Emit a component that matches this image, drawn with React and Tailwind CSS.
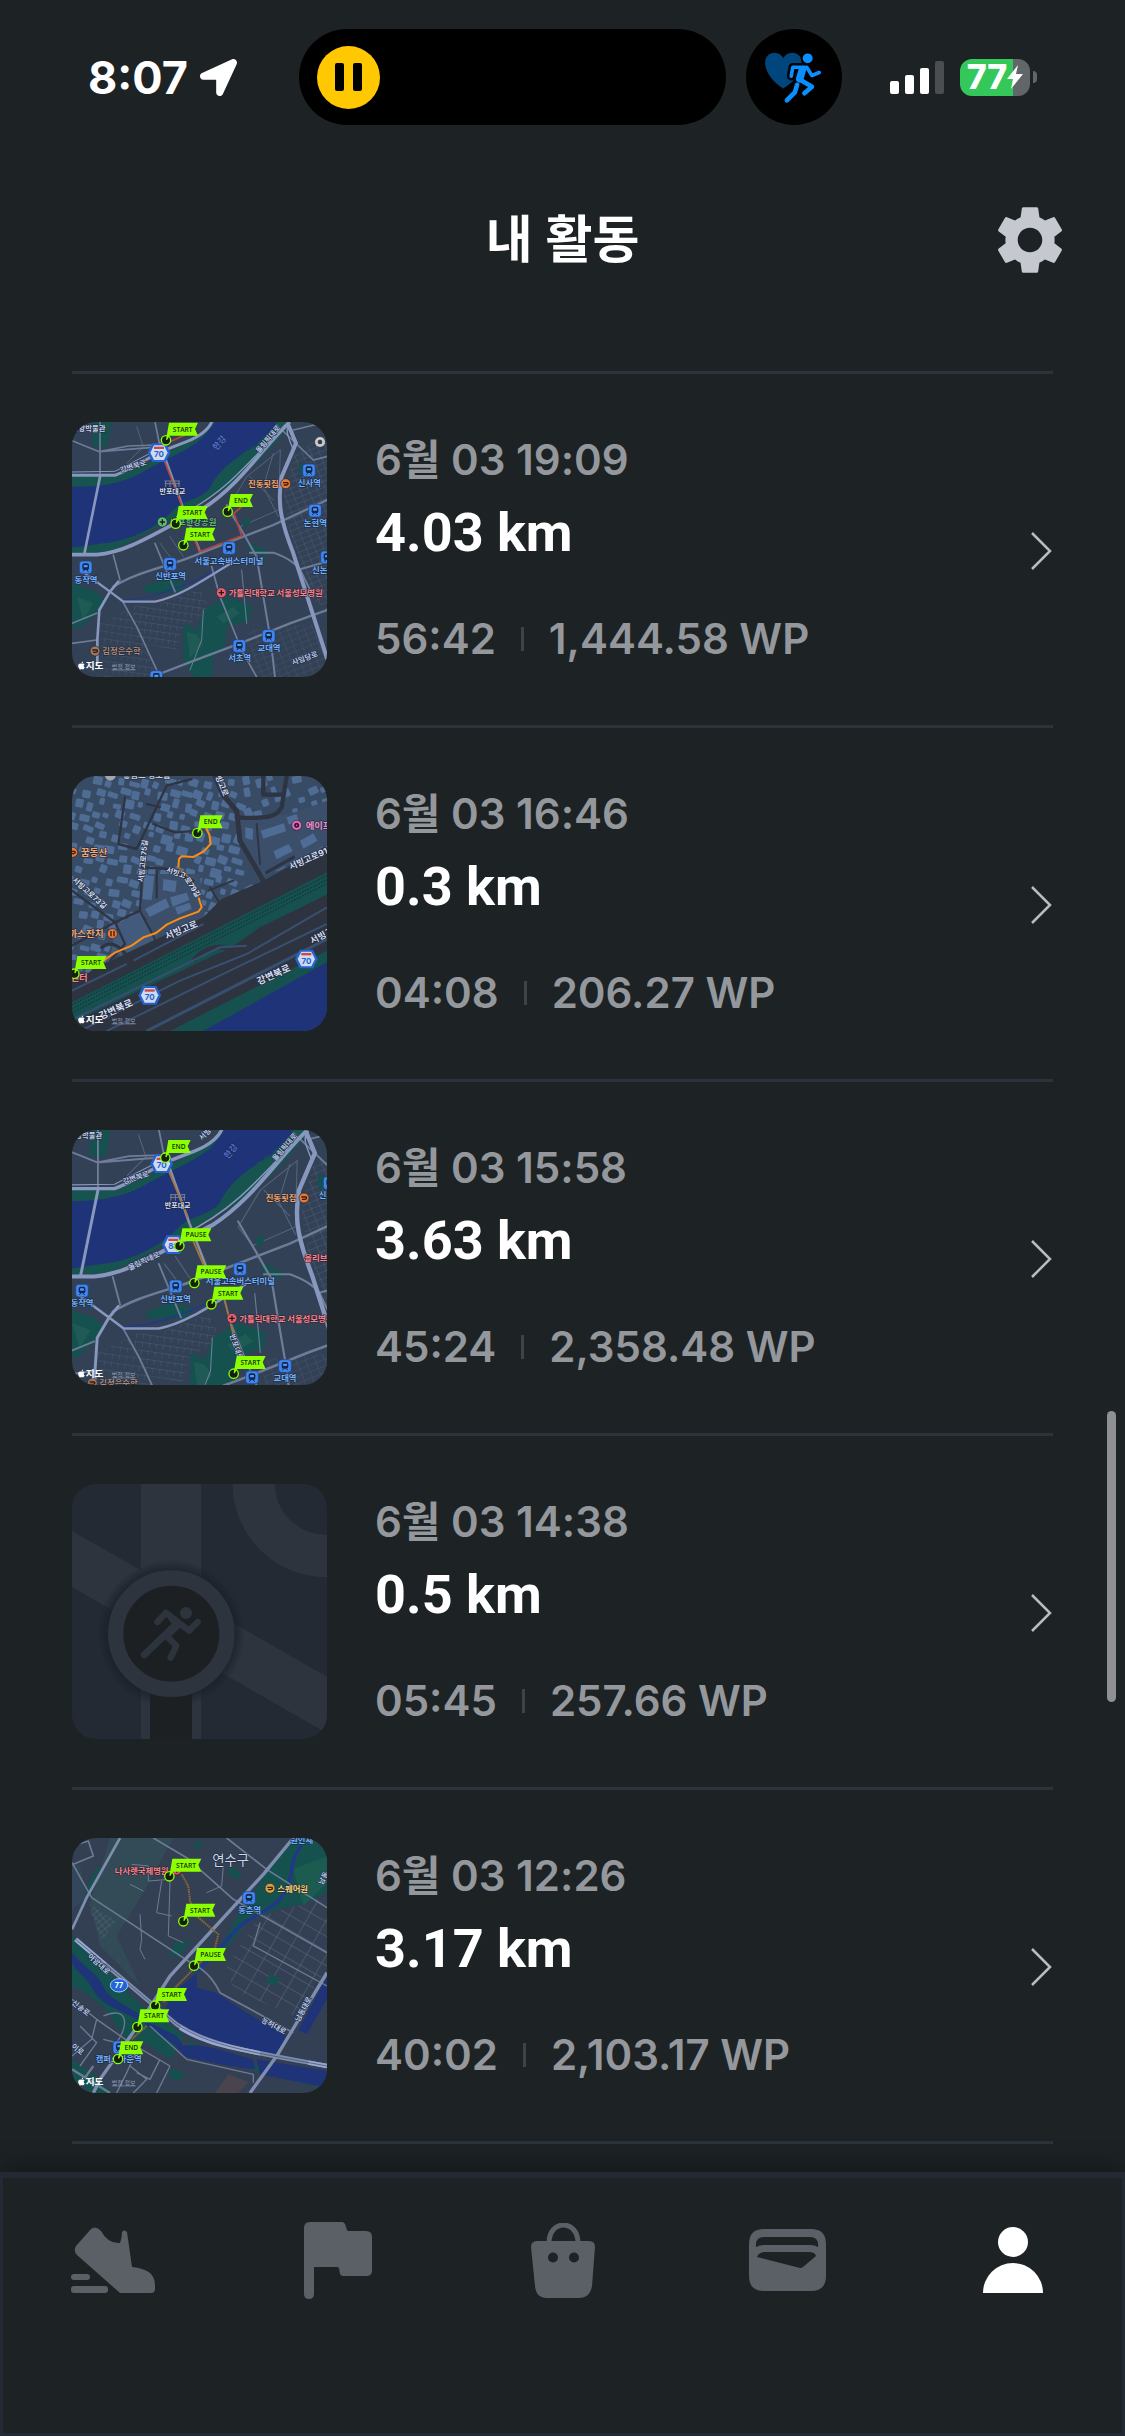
import React from "react";
import { FaApple, FaLocationArrow } from "react-icons/fa";
import { MdSettings } from "react-icons/md";

const mapFont = '"Inter", "Noto Sans CJK KR", sans-serif';

/* ---------- map pieces ---------- */

const FLAG_WIDTH = { START: 88, PAUSE: 88, END: 68 };

const Flag = ({ x, y, label }) => {
  const right = 8 + FLAG_WIDTH[label];
  return (
    <g transform={`translate(${x} ${y})`}>
      <circle r="14" fill="#16200f" stroke="#8cff00" strokeWidth="4" />
      <polygon
        points={`9,-53 ${right},-53 ${right - 9},-34 ${right},-14 11,-14 3,-1 0,-2`}
        fill="#8cff00"
      />
      <text
        x={(right + 4) / 2}
        y="-26"
        textAnchor="middle"
        fontSize="20"
        fontWeight="600"
        fontFamily='"Open Sans", sans-serif'
        fill="#17300a"
      >
        {label}
      </text>
    </g>
  );
};

const Label = ({ x, y, size = 25, color = "#6fb0ff", rotate = 0, weight = 700, anchor = "middle", children }) => (
  <text
    transform={`translate(${x} ${y}) rotate(${rotate})`}
    textAnchor={anchor}
    fontSize={size}
    fontWeight={weight}
    fontFamily={mapFont}
    fill={color}
    stroke="#1b2536"
    strokeWidth="3"
    paintOrder="stroke"
  >
    {children}
  </text>
);

const Station = ({ x, y }) => (
  <g transform={`translate(${x} ${y})`}>
    <rect x="-19" y="-19" width="38" height="38" rx="9" fill="#3f86ee" stroke="#1d3d80" strokeWidth="2" />
    <rect x="-10" y="-12" width="20" height="20" rx="6" fill="#14264a" />
    <rect x="-6" y="-7" width="12" height="7" rx="2" fill="#4f95f5" />
    <path d="M-8 13l4-5M8 13l-4-5" stroke="#14264a" strokeWidth="3" />
  </g>
);

const Poi = ({ x, y, color, mark = "plus" }) => (
  <g transform={`translate(${x} ${y})`}>
    <circle r="15" fill={color} stroke="#1b2536" strokeWidth="2" />
    {mark === "plus" && <path d="M0-8V8M-8 0H8" stroke="#2a1720" strokeWidth="4" />}
    {mark === "fork" && <path d="M-4-8V8M5-8V8" stroke="#3b1c08" strokeWidth="4" />}
    {mark === "dot" && <circle r="5" fill="none" stroke="#3b1030" strokeWidth="5" />}
    {mark === "bar" && <path d="M-8-3H6q4 5-3 7H-6" stroke="#3b1c08" strokeWidth="4" fill="none" />}
  </g>
);

const Shield = ({ x, y, label = "70" }) => (
  <g transform={`translate(${x} ${y})`}>
    <path d="M-34 0L-20-28H20L34 0L20 28H-20Z" fill="#2463cf" />
    <path d="M-26 0L-15-22H15L26 0L15 22H-15Z" fill="#cfdaf0" />
    <rect x="-15" y="-18" width="30" height="7" fill="#cf4747" />
    <text y="14" textAnchor="middle" fontSize="24" fontWeight="700" fontFamily={mapFont} fill="#2463cf">
      {label}
    </text>
  </g>
);

const Credit = () => (
  <g>
    <FaApple x="51" y="753" size="27" color="#ffffff" />
    <text x="77" y="777" fontSize="29" fontWeight="700" fontFamily={mapFont} fill="#ffffff">
      지도
    </text>
    <text x="155" y="776" fontSize="18" fontFamily={mapFont} fill="#8f9bb0" textDecoration="underline">
      법적 정보
    </text>
  </g>
);

const MapFrame = ({ title, bg, children }) => (
  <svg
    viewBox="36 36 765 765"
    role="img"
    aria-label={title}
    className="size-[255px] shrink-0 rounded-3xl"
  >
    <rect x="36" y="36" width="765" height="765" fill={bg} />
    {children}
  </svg>
);

/* Seoul around Banpo, shared by two thumbnails */
const SeoulBase = ({ id }) => (
  <g fill="none" strokeLinecap="round" strokeLinejoin="round">
    <defs>
      <pattern id={`${id}-a`} width="24" height="17" patternUnits="userSpaceOnUse" patternTransform="rotate(-22)">
        <path d="M0 0H24M0 0V17" stroke="#56647d" strokeWidth="2" />
      </pattern>
      <pattern id={`${id}-b`} width="19" height="22" patternUnits="userSpaceOnUse" patternTransform="rotate(8)">
        <path d="M0 0H19M0 0V12" stroke="#56647d" strokeWidth="2" />
      </pattern>
    </defs>

    {/* side street blocks */}
    <path d="M705 130L801 70V600L765 570L690 370L672 250Z" fill={`url(#${id}-a)`} />
    <path d="M560 660L690 650L760 640L801 740V801H590Z" fill={`url(#${id}-a)`} opacity=".7" />
    <path d="M215 590L290 585L420 535L450 600L370 650L350 720L240 700Z" fill={`url(#${id}-b)`} />
    <path d="M120 640L200 600L280 760V801H130Z" fill={`url(#${id}-b)`} opacity=".8" />
    <path d="M660 120L560 200L500 300L540 350L655 300Z" stroke="#55637c" strokeWidth="3" />
    <path d="M640 130L610 230L655 320M570 200L640 270M300 400L345 460M330 380L370 440M230 50L250 110L200 160" stroke="#55637c" strokeWidth="3" />

    {/* parks */}
    <g fill="#14514f">
      <path d="M100 36h54l-14 75-44-4z" />
      <path d="M36 520L110 545L138 575L110 610L60 655L36 650Z" />
      <path d="M260 525L320 505L380 520L360 545L300 550L245 545Z" />
      <path d="M372 640L410 660L430 600L500 560L575 585L570 630L500 650L495 710L460 740L455 801H400L370 745Z" />
      <path d="M715 160h26v30l-22 10zM560 395l60 25v20l-50-10zM545 335l20-15 6 22-18 12z" />
    </g>
    <path d="M380 665l30 8 20 30-40 40zM470 620l50-30 20 20-50 30zM50 560l50 20-30 50z" fill="#28605a" opacity=".6" />

    {/* Han river with its banks */}
    <path d="M36 190L170 200L290 145L380 100L440 55L452 36H700L600 150L500 235L380 300L260 370L150 425L36 432Z" fill="#17534f" />
    <path d="M36 230C120 232 190 220 250 185C320 145 400 115 435 75L465 36H650C630 70 600 85 590 105C560 125 480 165 450 235C420 270 370 270 340 300C290 355 200 395 130 400C90 405 60 412 36 412Z" fill="#1f3379" />
    <path d="M550 130l12-9 6 6-12 10zM570 114l10-8" stroke="#17534f" strokeWidth="3" />
    <path d="M190 570C280 570 400 520 520 455" stroke="#23388a" strokeWidth="4" />

    {/* minor roads */}
    <g stroke="#6e7c98" strokeWidth="5">
      <path d="M285 36L300 110" />
      <path d="M120 36V195M36 92L118 125L270 113M118 125L205 108L290 105" />
      <path d="M160 435L180 510M285 400L345 545M455 470L480 560L545 720L590 801" />
      <path d="M160 530C240 480 330 470 420 430L640 345L801 270" strokeWidth="7" />
      <path d="M500 285L550 370L590 440L610 560L632 690L645 801" strokeWidth="6" />
      <path d="M570 428H640C690 445 715 470 720 478L801 455M720 478L760 560" strokeWidth="6" />
      <path d="M290 795L420 745L540 700L690 640L801 600" strokeWidth="7" />
      <path d="M190 578L230 650L300 801M36 700L110 690M36 640L110 610" />
      <path d="M430 600L425 690L390 780M545 480L560 640" strokeWidth="3" />
      <path d="M700 60L801 36M650 45L760 150L801 140" />
    </g>

    {/* main roads */}
    <g stroke="#8797bd">
      <path d="M120 200L73 432" strokeWidth="8" />
      <path d="M36 196H165C220 175 270 140 310 122L380 95C430 75 450 50 455 36" strokeWidth="9" />
      <path d="M36 186L165 184L280 125" strokeWidth="3" />
      <path d="M36 434H110C210 425 290 365 430 295C540 225 610 110 685 40" strokeWidth="11" />
      <path d="M350 320C470 265 540 190 660 60" strokeWidth="4" />
      <path d="M685 45L708 100L665 200C650 280 665 340 700 430L801 745" strokeWidth="12" />
      <path d="M75 490L150 545L190 575H285C360 560 430 510 520 455" strokeWidth="7" />
      <path d="M175 515L150 545L118 600L112 690V760" strokeWidth="8" />
      <path d="M690 40C670 60 690 90 700 120" strokeWidth="4" />
    </g>
    <path d="M300 100L368 290L420 425" stroke="#8b8f9f" strokeWidth="7" />
  </g>
);

const Bridge = ({ x, y }) => (
  <g transform={`translate(${x} ${y})`} stroke="#7d7f86" strokeWidth="3" fill="none">
    <path d="M-23-8H23M-23 0H23M-20-8V10M-7-8V10M7-8V10M20-8V10" />
  </g>
);

const BanpoMap = () => (
  <MapFrame title="4.03 km 경로" bg="#334156">
    <SeoulBase id="banpo" />
    <path
      d="M330 95L375 75M312 150L365 285M405 390L418 425L545 377L522 310L545 290"
      fill="none"
      stroke="#b3443f"
      strokeWidth="5"
    />
    <Label x={86} y={64} size={22} color="#c6d3ee">중앙박물관</Label>
    <Label x={222} y={176} size={22} color="#b9c8ea" rotate={-18}>강변북로</Label>
    <Label x={485} y={104} size={26} color="#4d70dd" rotate={-52}>한강</Label>
    <Label x={630} y={92} size={22} color="#b9c8ea" rotate={-50}>올림픽대로</Label>
    <Shield x={297} y={128} />
    <Bridge x={337} y={221} />
    <Label x={337} y={251} size={21} color="#d5def2">반포대교</Label>
    <Poi x={307} y={336} color="#58c070" />
    <Label x={400} y={345} size={25} color="#62bd78">반포한강공원</Label>
    <Station x={747} y={181} />
    <Label x={748} y={229}>신사역</Label>
    <Poi x={677} y={221} color="#e5793b" mark="bar" />
    <Label x={610} y={230} color="#f2a46c">진동횟집</Label>
    <Station x={765} y={302} />
    <Label x={766} y={348}>논현역</Label>
    <Station x={801} y={442} />
    <Label x={756} y={488} anchor="start">신논현역</Label>
    <Station x={507} y={414} />
    <Label x={507} y={461}>서울고속버스터미널</Label>
    <Station x={330} y={462} />
    <Label x={332} y={508}>신반포역</Label>
    <Station x={77} y={472} />
    <Label x={78} y={518}>동작역</Label>
    <Poi x={484} y={548} color="#e2606c" />
    <Label x={506} y={557} color="#ff7f86" anchor="start">가톨릭대학교 서울성모병원</Label>
    <Station x={626} y={678} />
    <Label x={627} y={723}>교대역</Label>
    <Station x={538} y={708} />
    <Label x={539} y={753}>서초역</Label>
    <Label x={737} y={752} size={22} color="#b9c8ea" rotate={-20}>사임당로</Label>
    <Poi x={105} y={723} color="#9a7664" mark="bar" />
    <Label x={127} y={733} color="#b08c7a" anchor="start">김정은수학</Label>
    <Station x={289} y={801} />
    <circle cx="780" cy="96" r="15" fill="#c9cbd0" />
    <circle cx="780" cy="96" r="7" fill="#3b3d42" />
    <Flag x={318} y={91} label="START" />
    <Flag x={503} y={305} label="END" />
    <Flag x={347} y={341} label="START" />
    <Flag x={370} y={406} label="START" />
    <Credit />
  </MapFrame>
);

const RiversideMap = () => (
  <MapFrame title="3.63 km 경로" bg="#334156">
    <g transform="translate(-19 -5) scale(1.107)">
      <SeoulBase id="riverside" />
    </g>
    <path
      d="M322 150L385 300M400 370L430 440M494 545L520 650L548 720"
      fill="none"
      stroke="#a5743c"
      strokeWidth="5"
    />
    <Label x={76} y={60} size={22} color="#c6d3ee">중앙박물관</Label>
    <Label x={230} y={186} size={22} color="#b9c8ea" rotate={-18}>강변북로</Label>
    <Label x={440} y={54} size={22} color="#b9c8ea" rotate={-45}>서빙</Label>
    <Label x={519} y={106} size={26} color="#4d70dd" rotate={-50}>한강</Label>
    <Label x={680} y={92} size={22} color="#b9c8ea" rotate={-50}>올림픽대로</Label>
    <Label x={255} y={436} size={22} color="#b9c8ea" rotate={-25}>올림픽대로</Label>
    <Shield x={305} y={137} />
    <Shield x={340} y={380} label="88" />
    <Bridge x={353} y={238} />
    <Label x={353} y={269} size={21} color="#d5def2">반포대교</Label>
    <Poi x={732} y={240} color="#e5793b" mark="bar" />
    <Label x={663} y={249} color="#f2a46c">진동횟집</Label>
    <Station x={809} y={195} />
    <Label x={776} y={241} anchor="start">신사역</Label>
    <Label x={733} y={429} color="#ff7f86" anchor="start">올리브영</Label>
    <Station x={540} y={453} />
    <Label x={541} y={499}>서울고속버스터미널</Label>
    <Station x={347} y={505} />
    <Label x={347} y={551}>신반포역</Label>
    <Station x={66} y={518} />
    <Label x={66} y={564}>동작역</Label>
    <Poi x={516} y={601} color="#e2606c" />
    <Label x={538} y={611} color="#ff7f86" anchor="start">가톨릭대학교 서울성모병원</Label>
    <Label x={522} y={690} size={22} color="#b9c8ea" rotate={70}>반포대로</Label>
    <Station x={675} y={744} />
    <Label x={675} y={789}>교대역</Label>
    <Station x={576} y={778} />
    <Poi x={97} y={795} color="#9a7664" mark="bar" />
    <Label x={118} y={804} color="#b08c7a" anchor="start">김정은수학</Label>
    <Flag x={316} y={119} label="END" />
    <Flag x={358} y={384} label="PAUSE" />
    <Flag x={403} y={495} label="PAUSE" />
    <Flag x={454} y={559} label="START" />
    <Flag x={521} y={767} label="START" />
    <Credit />
  </MapFrame>
);

// cheap repeatable noise in 0..1
const noise = (n) => {
  const v = Math.sin(n * 127.1) * 43758.5453;
  return v - Math.floor(v);
};

// houses on a loose grid, each block with its own size and tilt
const houses = Array.from({ length: 22 * 18 }, (_, i) => {
  const col = i % 22;
  const row = Math.floor(i / 22);
  const east = col > 13;
  return {
    x: 20 + col * 37 + (row % 3) * 11 + noise(i) * 10,
    y: 34 + row * 33 + (col % 2) * 9 + noise(i + 500) * 9,
    w: 15 + noise(i + 900) * 19,
    h: 15 + noise(i + 1300) * 14,
    r: (east ? -28 : 6) + noise(i + 1700) * 18,
    skip: noise(i + 2100) < (east ? 0.35 : 0.1),
  };
}).filter((house) => !house.skip);

const VillageMap = () => (
  <MapFrame title="0.3 km 경로" bg="#384b65">
    <g fill="#4f6c95">
      {houses.map((b, i) => (
        <rect
          key={i}
          x={b.x}
          y={b.y}
          width={b.w}
          height={b.h}
          rx="4"
          transform={`rotate(${b.r} ${b.x} ${b.y})`}
        />
      ))}
    </g>
    <path d="M170 480L240 445L285 530L220 560L150 580Z" fill="#425a7b" />
    <path d="M540 165L690 150L801 110V240L610 340L540 230Z" fill="#3b4f6a" />
    <path d="M245 330H420L430 470L290 525L245 440Z" fill="#3b4f6a" />
    <g fill="#4f6c95">
      <path d="M253 332l30 4-8 72-28-2zM255 435l62-32 12 26-60 30zM310 345l40 6-4 34-38-6zM330 400l50-14 8 22-50 20zM345 430l44-14 6 18-42 18z" />
      <path d="M602 200l70-22 6 24-68 22zM680 160l30-10 6 20-30 12zM640 262l46-22 12 22-48 24zM720 230l40-22 12 22-42 24zM556 190l24 4-2 34-22-6z" />
    </g>

    {/* lanes of the village */}
    <g fill="none" stroke="#2e3442" strokeLinecap="round" strokeLinejoin="round">
      <path d="M195 100L175 240L230 255L320 65L395 45M280 180L345 205L420 200M240 310L330 315L400 350M245 355L240 440L165 475L36 380M240 440L285 525M165 475L195 540L150 590M290 320V400M165 475L36 545" strokeWidth="7" />
      <path d="M590 180L600 300M450 370L480 420M260 120L300 130M445 380L520 350" strokeWidth="6" />
      <path d="M465 36L490 95L530 140L540 230L610 350" strokeWidth="15" />
      <path d="M530 160C620 165 650 160 665 130L680 36M610 36V92H670" strokeWidth="13" />
      <path d="M620 325L700 280M125 550C150 530 180 540 210 590" strokeWidth="10" />
    </g>

    {/* expressway, rails and the river bank */}
    <path d="M36 655L130 600L290 525L430 460L485 405L610 350L801 245V801H36Z" fill="#2e3340" />
    <path d="M36 715L801 325V392L600 490L500 560L36 790Z" fill="#16504f" />
    <path d="M330 801L801 560V620L430 801Z" fill="#16504f" />
    <path d="M430 801L801 595V801Z" fill="#1f3379" />
    <g fill="none" stroke="#2e3340">
      <path d="M36 790L480 580C600 545 680 470 801 405" strokeWidth="26" />
      <path d="M400 590C440 540 500 540 515 570C530 600 510 610 500 630" strokeWidth="14" />
    </g>
    <g fill="none" stroke="#384f70" strokeWidth="6">
      <path d="M36 680L200 600M220 590L430 480" />
      <path d="M60 801L360 650L560 570L801 430" />
      <path d="M140 801L530 610L801 480" />
      <path d="M260 801L801 525" strokeWidth="9" />
      <path d="M36 768L480 550L560 545" />
    </g>
    <g fill="none" stroke="#0f3234" strokeWidth="3" strokeDasharray="5 4">
      <path d="M36 722L801 335M36 734L801 347M36 746L801 359" />
    </g>

    <path
      d="M130 590L165 566L215 545L250 520L288 507L320 482L360 463L415 443L425 430L416 402M355 310L357 285L365 277L400 279L430 263L452 240L448 212L438 192"
      fill="none"
      stroke="#ff8c12"
      strokeWidth="6"
    />
    <path d="M355 310L395 350L416 402" fill="none" stroke="#b36a20" strokeWidth="4" />

    <circle cx="151" cy="34" r="16" fill="#a3a8b0" />
    <Label x={260} y={43} color="#c6cede">홍림스 정오름</Label>
    <Label x={478} y={68} size={24} color="#d5def2" rotate={68}>빙고로</Label>
    <Label x={250} y={355} size={22} color="#d5def2" rotate={-84} anchor="start">서빙고로75길</Label>
    <Label x={36} y={350} size={22} color="#d5def2" rotate={42} anchor="start">서빙고로73길</Label>
    <Label x={317} y={323} size={22} color="#d5def2" rotate={20} anchor="start">서빙고</Label>
    <Label x={373} y={345} size={22} color="#d5def2" rotate={58} anchor="start">로79길</Label>
    <Label x={368} y={507} size={28} color="#d5def2" rotate={-23}>서빙고로</Label>
    <Label x={692} y={318} size={26} color="#d5def2" rotate={-24} anchor="start">서빙고로91길</Label>
    <Label x={757} y={541} size={27} color="#d5def2" rotate={-28} anchor="start">서빙고</Label>
    <Label x={645} y={641} size={29} color="#d5def2" rotate={-24}>강변북로</Label>
    <Label x={172} y={745} size={29} color="#d5def2" rotate={-24}>강변북로</Label>
    <Poi x={38} y={265} color="#e5793b" mark="bar" />
    <Label x={62} y={276} size={29} color="#f2a46c" anchor="start">꿈동산</Label>
    <Label x={131} y={520} size={29} color="#f2a46c" anchor="end">돈까스잔치</Label>
    <Poi x={157} y={509} color="#e5793b" mark="fork" />
    <Poi x={710} y={184} color="#e26bb8" mark="dot" />
    <Label x={737} y={194} size={28} color="#f08fd0" anchor="start">에이프</Label>
    <Label x={83} y={650} size={28} color="#ff7f86" anchor="end">센터</Label>
    <Shield x={739} y={585} />
    <Shield x={269} y={694} />
    <Flag x={412} y={207} label="END" />
    <Flag x={43} y={629} label="START" />
    <Credit />
  </MapFrame>
);

const YeonsuMap = () => (
  <MapFrame title="3.17 km 경로" bg="#334053">
    <defs>
      <pattern id="yeonsu-grid" width="52" height="38" patternUnits="userSpaceOnUse" patternTransform="rotate(30)">
        <path d="M0 0H52M0 0V38" stroke="#5d6a83" strokeWidth="3" />
      </pattern>
      <pattern id="yeonsu-fine" width="16" height="14" patternUnits="userSpaceOnUse" patternTransform="rotate(-40)">
        <path d="M0 0H16M0 0V14" stroke="#64718a" strokeWidth="2" />
      </pattern>
    </defs>
    <path d="M150 36H340L250 200L170 330L240 480L120 360L90 230Z" fill="#324b56" />
    <path d="M36 250L80 215L60 120L36 110Z" fill="#33475a" />
    <path d="M500 420L600 270L801 215V430L700 570L520 490Z" fill="url(#yeonsu-grid)" />
    <path d="M84 232L167 285L125 345Z" fill="url(#yeonsu-fine)" />

    {/* green areas */}
    <g fill="#15524f">
      <path d="M690 36H770L801 80V200L740 230L650 250L560 290L480 390L450 410L540 260Z" />
      <path d="M36 330L130 420L250 545L350 610L410 680L600 740L801 790V760L590 720L370 640L330 700L240 640L200 640L130 540L60 490L36 480Z" />
      <path d="M85 205L125 120L110 125L75 195ZM345 345l30 12-14 38-34-10zM375 340l14 6-6 18-14-6zM630 445l30 12-12 22-30-12zM510 120l34 20-8 22-34-20zM405 45l20 6-4 20-18-6z" />
      <path d="M36 700L130 770L150 801H100L36 760ZM335 725l40 20-20 20-30-12z" />
    </g>
    <path d="M700 130L801 90V170L730 240Z" fill="#1c5c50" />
    <path d="M505 745L565 768L535 801H465Z" fill="#4a444e" />

    {/* water */}
    <g fill="#1f3379">
      <path d="M410 440L410 485L470 500L560 560L680 630L645 690L520 655L430 650L360 600L300 580L340 500Z" />
      <path d="M36 380C80 430 110 440 130 480C150 530 220 540 270 590L350 630L370 660C440 650 500 680 580 700L585 730C520 725 430 705 370 690C350 650 300 630 250 590C180 550 130 540 105 500C80 450 50 440 36 410Z" />
      <path d="M590 700L801 735V785L600 745Z" />
      <path d="M801 450V520L740 625L715 612Z" />
    </g>
    <path d="M725 60C690 90 700 150 680 190C650 250 590 260 540 300L410 440" fill="none" stroke="#20378a" strokeWidth="10" />

    {/* streets */}
    <g fill="none" stroke="#6d7a94" strokeWidth="5" strokeLinejoin="round">
      <path d="M36 60L85 45L100 90L40 115M36 110L95 215L400 415C450 440 470 480 480 500L700 620M280 36L380 95L520 220L801 380M500 36L620 130L801 245" />
      <path d="M330 165L325 330L370 350M305 165L290 260L335 270M215 115L265 120V165L330 160M240 265L245 340L240 370L255 400M210 175L250 195M490 120L485 180L440 200" strokeWidth="3" />
      <path d="M36 520L110 580L210 650L330 720M130 570C200 540 210 590 170 650L130 640M60 600L110 650L60 720M110 580L95 640L36 690M240 650L200 740L170 801M300 700L270 760L230 740M330 720L290 801M210 720L260 760L220 801M600 290L580 360L801 480" strokeWidth="4" />
      <path d="M36 730L150 801M75 755L100 720" strokeWidth="7" />
      <path d="M270 600L380 700L580 745L580 770" strokeWidth="4" />
    </g>
    <g fill="none" stroke="#7f8eae">
      <path d="M180 36L80 215L36 310" strokeWidth="8" />
      <path d="M700 36L610 145L330 450L240 590L120 760L100 801" strokeWidth="10" />
      <path d="M801 440L650 690L570 801" strokeWidth="10" />
      <path d="M47 340L260 520L350 595C450 660 560 675 801 720" strokeWidth="13" />
    </g>
    <path d="M47 340L135 415M360 605C440 655 520 665 600 682M745 710L801 720" fill="none" stroke="#98a8d0" strokeWidth="13" />
    <path d="M47 340L260 520L350 595C450 660 560 675 801 720" fill="none" stroke="#3c4a63" strokeWidth="2" />

    <path
      d="M365 145L385 180L390 225L410 270L475 325L465 365M430 400L350 480L310 530M260 600L215 640"
      fill="none"
      stroke="#8a6535"
      strokeWidth="6"
      strokeDasharray="5 2"
    />

    <Label x={512} y={118} size={40} color="#cfd9ec" weight={400}>연수구</Label>
    <Label x={725} y={51}>원인재</Label>
    <Label x={245} y={143} color="#ff7f86">나사렛국제병원</Label>
    <Poi x={350} y={132} color="#d84f5a" />
    <Poi x={630} y={187} color="#d9a23c" mark="bar" />
    <Label x={652} y={197} color="#f5d374" anchor="start">스퀘어원</Label>
    <Station x={567} y={216} />
    <Label x={569} y={261}>동춘역</Label>
    <Label x={112} y={420} size={22} color="#b9c8ea" rotate={42}>아암대로</Label>
    <Label x={58} y={552} size={22} color="#b9c8ea" rotate={38}>신송로</Label>
    <Label x={48} y={676} size={22} color="#b9c8ea" rotate={38}>이로</Label>
    <Label x={638} y={606} size={22} color="#b9c8ea" rotate={28}>능허대로</Label>
    <Label x={737} y={553} size={22} color="#b9c8ea" rotate={-62}>남동대로</Label>
    <Label x={797} y={160} size={22} color="#b9c8ea" rotate={-62}>남동</Label>
    <ellipse cx="177" cy="478" rx="26" ry="20" fill="#1f66d8" stroke="#a8c4f5" strokeWidth="3" />
    <text x="177" y="486" textAnchor="middle" fontSize="21" fontWeight="700" fontFamily={mapFont} fill="#ffffff">
      77
    </text>
    <Station x={178} y={664} />
    <Label x={176} y={707}>캠퍼스타운역</Label>
    <Flag x={328} y={151} label="START" />
    <Flag x={370} y={286} label="START" />
    <Flag x={402} y={419} label="PAUSE" />
    <Flag x={285} y={539} label="START" />
    <Flag x={232} y={603} label="START" />
    <Flag x={174} y={699} label="END" />
    <Credit />
  </MapFrame>
);

const EmptyMap = () => (
  <MapFrame title="경로 없음" bg="#232a33">
    <defs>
      <radialGradient id="empty-shade">
        <stop offset="84%" stopColor="#1a1f27" stopOpacity=".8" />
        <stop offset="100%" stopColor="#1a1f27" stopOpacity="0" />
      </radialGradient>
    </defs>
    <g fill="#2d343e">
      <rect x="243" y="36" width="180" height="765" />
      <path d="M36 177L801 614V784L36 345Z" />
    </g>
    <circle cx="799" cy="34" r="218" fill="none" stroke="#2d343e" strokeWidth="127" />
    <circle cx="333" cy="485" r="222" fill="url(#empty-shade)" />
    <path d="M270 640H396V801H270Z" fill="#1c2023" />
    <circle cx="334" cy="485" r="167" fill="#1c2023" stroke="#2d343e" strokeWidth="46" />
    <circle cx="378" cy="423" r="18" fill="#2d343e" />
    <g fill="none" stroke="#2d343e" strokeWidth="19" strokeLinecap="round" strokeLinejoin="round">
      <path d="M292 450L318 422L387 476L413 450" />
      <path d="M253 548L350 455" strokeWidth="21" />
      <path d="M322 494L349 521L332 557" />
      <path d="M335 440L352 462L325 488" />
    </g>
  </MapFrame>
);

/* ---------- status bar ---------- */

const HeartRunner = () => (
  <svg viewBox="21 15 291 291" className="size-24" aria-hidden="true">
    <path
      d="M134 195C110 182 79 150 79 118C79 98 92 87 107 87C120 87 129 94 134 103C139 94 148 87 161 87C178 87 190 98 190 118C190 150 158 182 134 195Z"
      fill="#00457c"
    />
    <g fill="none" stroke="#000000" strokeLinecap="round" strokeLinejoin="round">
      <circle cx="208" cy="104" r="18" fill="#000000" strokeWidth="6" />
      <path d="M158 158L163 131H200L205 131L221 156L243 147" strokeWidth="26" />
      <path d="M190 136L184 170L222 190L198 211M176 180L169 207L145 231" strokeWidth="28" />
    </g>
    <g fill="none" stroke="#0a8fff" strokeLinecap="round" strokeLinejoin="round">
      <path d="M158 158L163 131H200L205 131L221 156L243 147" strokeWidth="11" />
      <path d="M192 138L184 166" strokeWidth="23" />
      <path d="M184 168L221 190L198 210" strokeWidth="14" />
      <path d="M176 184L169 207L145 231" strokeWidth="14" />
    </g>
    <circle cx="208" cy="104" r="15" fill="#0a8fff" />
  </svg>
);

const StatusBar = () => (
  <div className="flex h-[155px] items-start justify-between pt-[29px] pr-[88px] pl-[88px]">
    <div className="flex h-24 w-[211px] items-center gap-3">
      <span className="text-[45px] leading-none font-bold">8:07</span>
      <FaLocationArrow size={37} />
    </div>

    <div className="flex flex-1 gap-5">
      <div className="flex h-24 w-[427px] items-center rounded-full bg-black pl-[18px]">
        <span className="flex size-[63px] items-center justify-center gap-[9px] rounded-full bg-[#ffc800]">
          <span className="h-7 w-[9px] rounded-xs bg-black" />
          <span className="h-7 w-[9px] rounded-xs bg-black" />
        </span>
      </div>
      <div className="size-24 rounded-full bg-black">
        <HeartRunner />
      </div>
    </div>

    <div className="flex h-24 items-center justify-end gap-4">
      <div className="flex items-end gap-[6px]">
        <span className="h-[13px] w-[9px] rounded-xs bg-white" />
        <span className="h-[19px] w-[9px] rounded-xs bg-white" />
        <span className="h-[26px] w-[9px] rounded-xs bg-white" />
        <span className="h-[33px] w-[9px] rounded-xs bg-[#4a4e51]" />
      </div>
      <div className="flex items-center gap-[3px]">
        <div className="flex h-[37px] w-[70px] items-center justify-center overflow-hidden rounded-xl bg-linear-to-r from-[#34c759] from-76% to-[#636669] to-76%">
          <span className="text-[34px] leading-none font-extrabold">77</span>
          <svg viewBox="0 0 16 24" className="h-6 w-4" aria-hidden="true">
            <path d="M11 0L0 14H6L4 24L16 9H9Z" fill="#ffffff" />
          </svg>
        </div>
        <span className="h-3 w-1 rounded-r-full bg-[#636669]" />
      </div>
    </div>
  </div>
);

/* ---------- activity list ---------- */

const activities = [
  { date: "6월 03 19:09", distance: "4.03 km", time: "56:42", points: "1,444.58 WP", Map: BanpoMap },
  { date: "6월 03 16:46", distance: "0.3 km", time: "04:08", points: "206.27 WP", Map: VillageMap },
  { date: "6월 03 15:58", distance: "3.63 km", time: "45:24", points: "2,358.48 WP", Map: RiversideMap },
  { date: "6월 03 14:38", distance: "0.5 km", time: "05:45", points: "257.66 WP", Map: EmptyMap },
  { date: "6월 03 12:26", distance: "3.17 km", time: "40:02", points: "2,103.17 WP", Map: YeonsuMap },
];

const ActivityRow = ({ activity }) => {
  const { date, distance, time, points, Map } = activity;
  return (
    <li className="border-b-[3px] border-[#2b333b]">
      <a href="#activity" className="flex items-center gap-12 py-12">
        <Map />
        <div className="min-w-0 flex-1">
          <p className="text-[42px] leading-[60px] font-semibold text-[#94989c]">{date}</p>
          <p className="mt-[7px] font-[Roboto] text-[54px] leading-[72px] font-bold">{distance}</p>
          <p className="mt-10 flex items-center text-[42px] leading-[60px] font-semibold text-[#94989c]">
            {time}
            <span className="mx-[25px] h-6 w-[3px] bg-[#3d4349]" />
            {points}
          </p>
        </div>
        <svg viewBox="0 0 24 40" className="h-10 w-6" fill="none" aria-hidden="true">
          <path d="M3 3L21 21L3 39" stroke="#b9bcc1" strokeWidth="2.5" />
        </svg>
      </a>
    </li>
  );
};

/* ---------- bottom tabs ---------- */

const ShoeIcon = () => (
  <svg viewBox="72 85 84 66" className="h-[66px] w-[84px]" fill="currentColor">
    <path d="M92 87Q97 83 102 89Q109 102 121 101Q123 96 123 90Q125 87 128 90L133 125Q156 127 156 143V147Q156 151 152 151H121L78 113Q74 109 77 104Z" />
    <rect x="72" y="132" width="19" height="6" rx="3" />
    <rect x="72" y="144" width="37" height="7" rx="3" />
  </svg>
);

const FlagIcon = () => (
  <svg viewBox="303 83 68 77" className="h-[77px] w-[68px]" fill="currentColor">
    <path d="M309 83H341Q343 83 344 85L346 91Q346 92 348 92H365Q371 92 371 98V132Q371 137 365 137H342Q340 137 339 135L338 129Q337 128 336 128H313V155Q313 160 308 160T303 155V89Q303 83 309 83Z" />
  </svg>
);

const BagIcon = () => (
  <svg viewBox="529 81 64 75" className="h-[75px] w-16" fill="currentColor">
    <path d="M547 101C547 77 576 77 576 101" fill="none" stroke="currentColor" strokeWidth="5" />
    <path
      fillRule="evenodd"
      d="M535 99H587Q593 99 593 105L590 144Q588 156 577 156H545Q534 156 533 144L529 105Q529 99 535 99ZM546 115.500a5 5 0 1 0 10 0a5 5 0 1 0-10 0ZM567 115.500a5 5 0 1 0 10 0a5 5 0 1 0-10 0Z"
    />
  </svg>
);

const WalletIcon = () => (
  <svg viewBox="749 89 77 62" className="h-[62px] w-[77px]" fill="currentColor">
    <path
      fillRule="evenodd"
      d="M764 89H811Q826 89 826 104V136Q826 151 811 151H764Q749 151 749 136V104Q749 89 764 89ZM756 107Q760 105 764 105H810Q815 105 818 107Q819 97 810 97H764Q755 97 756 107ZM757 117L800 128Q802 128 803 127L816 116Q815 112 809 112H764Q758 113 757 117Z"
    />
  </svg>
);

const PersonIcon = () => (
  <svg viewBox="982 87 60 66" className="h-[66px] w-[60px]" fill="currentColor">
    <circle cx="1012" cy="102" r="15" />
    <path d="M982 153a30 30 0 0 1 60 0Z" />
  </svg>
);

const tabs = [
  { name: "운동", Icon: ShoeIcon },
  { name: "챌린지", Icon: FlagIcon },
  { name: "상점", Icon: BagIcon },
  { name: "지갑", Icon: WalletIcon },
  { name: "내 활동", Icon: PersonIcon, active: true },
];

const TabBar = () => (
  <nav className="sticky bottom-0 mt-auto grid h-[264px] grid-cols-5 items-start border-t-[3px] border-[#242a33] bg-[#1d2225] shadow-[inset_0_0_0_3px_#242a33,0_-6px_24px_rgba(0,0,0,0.3)]">
    {tabs.map(({ name, Icon, active }) => (
      <button
        key={name}
        type="button"
        aria-label={name}
        aria-current={active ? "page" : undefined}
        className={
          active
            ? "flex h-[170px] items-center justify-center text-white"
            : "flex h-[170px] items-center justify-center text-[#5b6066]"
        }
      >
        <Icon />
      </button>
    ))}
  </nav>
);

const App = () => (
  <div className="relative flex min-h-screen flex-col bg-[#1d2225] font-[Inter,'Noto_Sans_CJK_KR',sans-serif] text-white">
    <StatusBar />

    <header className="grid h-[170px] grid-cols-[80px_1fr_80px] items-center px-14">
      <h1 className="col-start-2 text-center text-[51px] leading-[72px] font-semibold">내 활동</h1>
      <button type="button" aria-label="설정" className="text-[#c5c8cf]">
        <MdSettings size={82} />
      </button>
    </header>

    <main className="px-[72px] pt-[46px] pb-7">
      <ul className="border-t-[3px] border-[#2b333b]">
        {activities.map((activity) => (
          <ActivityRow key={activity.date} activity={activity} />
        ))}
      </ul>
    </main>

    {/* scroll thumb */}
    <div className="absolute top-[1411px] right-[9px] h-[291px] w-[9px] rounded-full bg-[#8e9092]" />

    <TabBar />
  </div>
);

export default App;
